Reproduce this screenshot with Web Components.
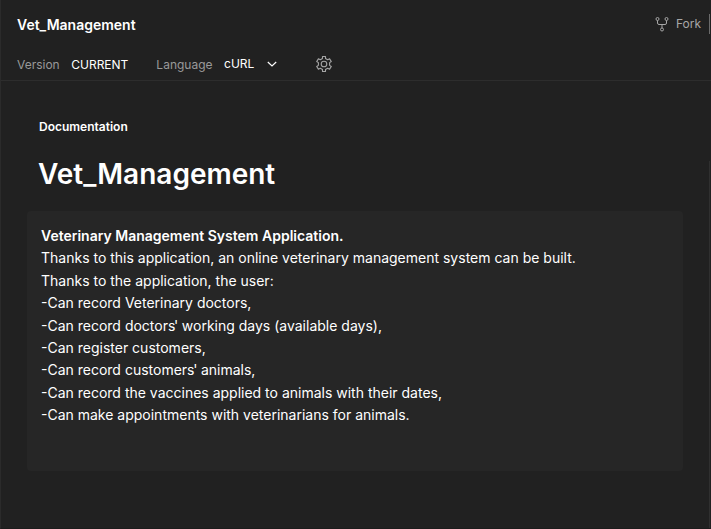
<!DOCTYPE html>
<html lang="en"><head><meta charset="utf-8"><title>Vet_Management</title>
<style>
html,body{margin:0;height:100%;background:#212121;overflow:hidden}
body{font-family:Inter,"Liberation Sans",sans-serif;color:#fff}
.apos{margin-left:-1.3px;letter-spacing:-.4px}
</style></head><body>
<docs-page>
  <docs-header slot="header" name="Vet_Management">
    <fork-action slot="action">Fork</fork-action>
    <header-option label="Version">CURRENT</header-option>
    <header-option label="Language" menu>cURL</header-option>
    <settings-icon></settings-icon>
  </docs-header>
  <docs-content heading="Vet_Management">
    <span slot="eyebrow">Documentation</span>
    <description-card><strong>Veterinary Management System Application.</strong><br>Thanks to this application, an online veterinary management system can be built.<br>Thanks to the application, the user:<br>-Can record Veterinary doctors,<br>-Can record doctors<span class="apos">'</span> working days (available days),<br>-Can register customers,<br>-Can record customers<span class="apos">'</span> animals,<br>-Can record the vaccines applied to animals with their dates,<br>-Can make appointments with veterinarians for animals.</description-card>
  </docs-content>
</docs-page>
<script>
const define = (name, html) => customElements.define(name, class extends HTMLElement {
  constructor() {
    super();
    this.attachShadow({mode: 'open'}).innerHTML = html;
  }
  connectedCallback() {
    for (const el of this.shadowRoot.querySelectorAll('[data-attr]'))
      el.textContent = this.getAttribute(el.dataset.attr);
  }
});
define('docs-page', `<style>
:host{display:flex;flex-direction:column;height:529px;box-sizing:border-box;border-left:1px solid #2b2b2b;border-bottom:1px solid #1c1c1c}
main{flex:1;display:flex}
main ::slotted(*){flex:1}
.rail{width:1px;margin:80px 1px 0 0;background:#303030}
</style><slot name="header"></slot><main><slot></slot><div class="rail"></div></main>`);
define('docs-header', `<style>
:host{display:block;height:81px;box-sizing:border-box;border-bottom:1px solid #2d2d2d}
.top{display:flex;height:48px;align-items:center;justify-content:space-between;padding-left:16px}
.name{font-weight:600;font-size:14px;line-height:20px;padding-top:2px}
.options{display:flex;height:32px;align-items:center;padding-left:16px}
</style><div class="top"><span class="name" data-attr="name"></span><slot name="action"></slot></div>
<div class="options"><slot></slot></div>`);
define('fork-action', `<style>
:host{display:flex;align-items:center;font-size:12px;line-height:20px;color:#a6a6a6}
svg{margin-right:6px}
i{width:1px;height:20px;background:#6b6b6b;margin:0 1px 0 8px}
</style><svg width="16" height="16" viewBox="0 0 16 16" fill="none" stroke="#a6a6a6"><circle cx="3.5" cy="3" r="1.5"/><circle cx="12.5" cy="3" r="1.5"/><circle cx="8" cy="13.5" r="1.5"/><path d="M3.5 4.5V7Q3.5 8.5 5 8.5H11Q12.5 8.5 12.5 7V4.5M8 8.5V12"/></svg><slot></slot><i></i>`);
define('header-option', `<style>
:host{display:flex;align-items:center;font-size:12px;line-height:16px;margin-right:28px}
:host([menu]){margin-right:36px}
.label,.value{padding-top:2px}
:host([menu]) .value{padding-top:0}
.label{color:#999;margin-right:11.5px}
svg{display:none;margin-left:10px}
:host([menu]) svg{display:block}
</style><span class="label" data-attr="label"></span><span class="value"><slot></slot></span><svg width="16" height="16" viewBox="0 0 16 16" fill="none" stroke="#fff" stroke-width="1.2"><path d="M3.800 6l4.200 4 4.200-4"/></svg>`);
define('settings-icon', `<style>:host{display:block;height:16px}svg{display:block}</style>
<svg width="16" height="16" viewBox="0 0 16 16" fill="none" stroke="#a6a6a6" stroke-width="1.1" stroke-linejoin="round"><path d="M6.500.55h3v1.900l2.200 1.300 1.900-.9 1.700 2.700-1.700 1.100v2.700l1.700 1.100-1.700 2.700-1.900-.9-2.200 1.300v1.900h-3v-1.900l-2.200-1.300-1.900.9L.7 10.450l1.700-1.100v-2.700L.7 5.550l1.700-2.700 1.900.9 2.200-1.300z"/><circle cx="8" cy="8" r="2.800"/></svg>`);
define('docs-content', `<style>
:host{display:block;padding:36px 26px 0 26px}
.eyebrow{font-size:12px;font-weight:600;line-height:20px;padding-left:12px}
h1{font-size:28px;font-weight:600;line-height:40px;margin:17px 0 17px;padding-left:11px}
</style><div class="eyebrow"><slot name="eyebrow"></slot></div><h1 data-attr="heading"></h1><slot></slot>`);
define('description-card', `<style>
:host{display:block;height:260px;box-sizing:border-box;padding:14px;background:#262626;border-radius:4px;font-size:14px;line-height:22.4px}
::slotted(strong){font-weight:600}
</style><slot></slot>`);
</script></body></html>
